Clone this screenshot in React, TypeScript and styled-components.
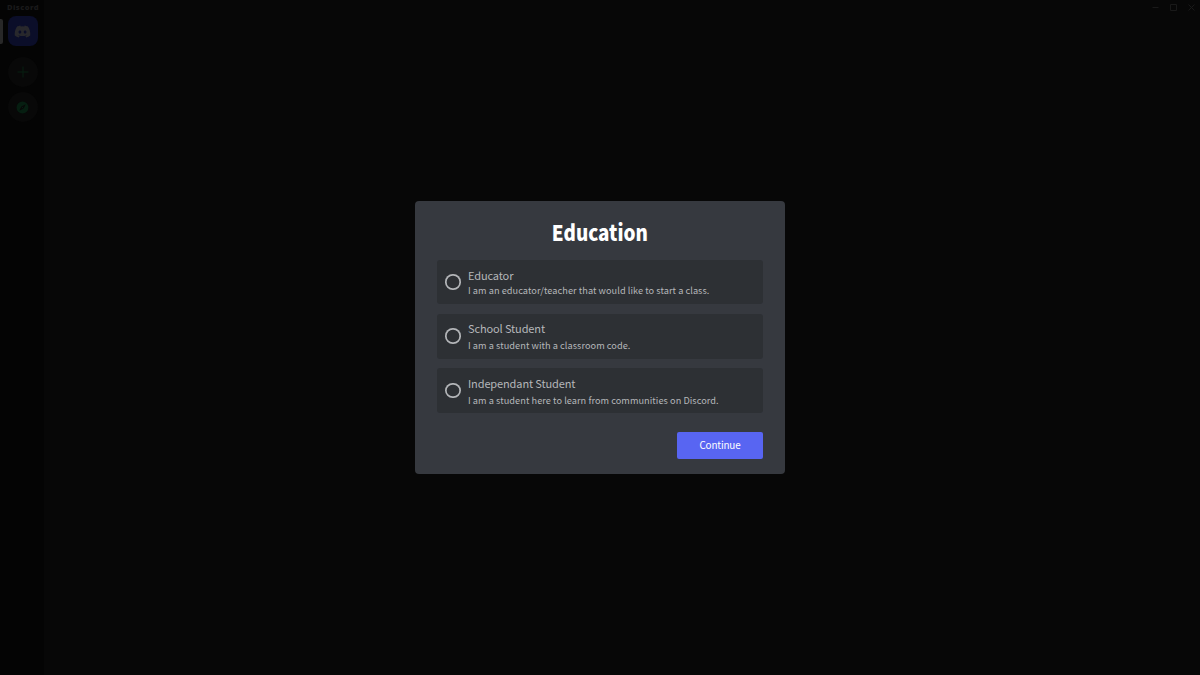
import React, { useState } from "react";
import styled, { createGlobalStyle } from "styled-components";
import { FaDiscord } from "react-icons/fa";

const GlobalStyle = createGlobalStyle`
  * {
    box-sizing: border-box;
  }

  body {
    margin: 0;
    background-color: #070707;
    font-family: "Noto Sans CJK SC", "Noto Sans", sans-serif;
  }
`;

const Window = styled.div`
  height: 100vh;
  display: flex;
  overflow: hidden;
  background-color: #070707;
`;

const Sidebar = styled.nav`
  width: 44px;
  display: flex;
  flex-direction: column;
  background-color: #040404;
`;

const Wordmark = styled.span`
  height: 16.4px;
  padding-left: 7px;
  color: #19191a;
  font-family: "Open Sans", sans-serif;
  font-size: 7.5px;
  font-weight: 800;
  line-height: 14px;
  letter-spacing: 0.45px;
`;

const ServerRow = styled.div<{ $gap: number }>`
  height: 30px;
  margin-bottom: ${props => props.$gap}px;
  display: flex;
  align-items: center;
`;

const Pill = styled.span<{ $active?: boolean }>`
  width: 2.5px;
  height: 25px;
  margin-right: 5px;
  border-radius: 0 2px 2px 0;
  background-color: ${props => (props.$active ? "#282828" : "transparent")};
`;

const ServerButton = styled.button<{ $active?: boolean }>`
  width: 30px;
  height: 30px;
  padding: 0;
  border: none;
  display: flex;
  align-items: center;
  justify-content: center;
  border-radius: ${props => (props.$active ? "8px" : "50%")};
  background-color: ${props => (props.$active ? "#0b0e29" : "#080808")};
  color: ${props => (props.$active ? "#28282c" : "#061e11")};
`;

const Content = styled.main`
  flex: 1;
  display: flex;
  justify-content: flex-end;
  align-items: flex-start;
`;

const WindowControls = styled.div`
  display: flex;
  gap: 11px;
  padding: 4px 5px 0 0;
  color: #191919;
`;

const ModalArea = styled.div`
  position: fixed;
  inset: 0;
  display: flex;
  align-items: center;
  justify-content: center;
`;

const ModalBox = styled.div`
  width: 370px;
  height: 273px;
  padding: 0 22px 0 22.3px;
  display: flex;
  flex-direction: column;
  border-radius: 4px;
  background-color: #36393f;
`;

const ModalTitle = styled.h2`
  margin: 17.5px 0 15.2px;
  color: #ffffff;
  font-size: 21.5px;
  font-weight: 900;
  line-height: 26px;
  text-align: center;
  transform: scaleX(0.875);
`;

const OptionList = styled.div`
  display: flex;
  flex-direction: column;
  gap: 9.5px;
`;

const Option = styled.button`
  width: 100%;
  height: 44.7px;
  padding: 0 0 0 8px;
  border: none;
  border-radius: 3px;
  display: flex;
  align-items: center;
  gap: 7.2px;
  background-color: #2d3034;
  color: #b5b7ba;
  font-family: inherit;
  text-align: left;
`;

const Radio = styled.span<{ $checked: boolean }>`
  flex: none;
  width: 15.5px;
  height: 15.5px;
  border-radius: 50%;
  box-shadow: inset 0 0 0 1.7px #b3b5b8;
  background-color: ${props => (props.$checked ? "#b9bbbe" : "transparent")};
`;

const OptionText = styled.span<{ $gap: number }>`
  display: flex;
  flex-direction: column;
  gap: ${props => props.$gap}px;
  padding-top: ${props => (props.$gap > 1 ? 1.4 : 0)}px;
`;

const OptionTitle = styled.span`
  font-size: 11px;
  line-height: 15px;
  letter-spacing: -0.12px;
`;

const OptionDescription = styled.span`
  font-size: 9.2px;
  line-height: 13px;
  letter-spacing: 0.05px;
  white-space: nowrap;
`;

const ContinueButton = styled.button`
  align-self: flex-end;
  width: 86px;
  height: 27px;
  margin-top: 19px;
  padding: 0;
  border: none;
  border-radius: 2px;
  background-color: #5865f2;
  color: #ffffff;
  font-family: inherit;
  font-size: 9.9px;
  line-height: 27px;
  letter-spacing: -0.15px;
`;

const options = [
  {
    title: "Educator",
    description: "I am an educator/teacher that would like to start a class.",
    gap: 1,
  },
  {
    title: "School Student",
    description: "I am a student with a classroom code.",
    gap: 3,
  },
  {
    title: "Independant Student",
    description: "I am a student here to learn from communities on Discord.",
    gap: 3,
  },
];

const PlusIcon = () => (
  <svg width="12" height="12" viewBox="0 0 12 12" stroke="currentColor">
    <path d="M6 .5v11M.5 6h11" />
  </svg>
);

const CompassIcon = () => (
  <svg width="13" height="13" viewBox="0 0 24 24" fill="currentColor">
    <path
      fillRule="evenodd"
      d="M12 1a11 11 0 1 0 0 22 11 11 0 0 0 0-22zm6 5-4 8-8 4 4-8z"
    />
    <circle cx="12" cy="12" r="1.3" />
  </svg>
);

const App = () => {
  const [selected, setSelected] = useState("");

  return (
    <>
      <GlobalStyle />
      <Window>
        <Sidebar>
          <Wordmark>Discord</Wordmark>
          <ServerRow $gap={11}>
            <Pill $active />
            <ServerButton $active>
              <FaDiscord size={17} />
            </ServerButton>
          </ServerRow>
          <ServerRow $gap={5}>
            <Pill />
            <ServerButton>
              <PlusIcon />
            </ServerButton>
          </ServerRow>
          <ServerRow $gap={0}>
            <Pill />
            <ServerButton>
              <CompassIcon />
            </ServerButton>
          </ServerRow>
        </Sidebar>
        <Content>
          <WindowControls>
            <svg width="7" height="7" viewBox="0 0 7 7" stroke="currentColor">
              <path d="M.5 3.5h6" />
            </svg>
            <svg
              width="7"
              height="7"
              viewBox="0 0 7 7"
              fill="none"
              stroke="currentColor">
              <path d="M.5.5h6v6h-6z" />
            </svg>
            <svg width="7" height="7" viewBox="0 0 7 7" stroke="currentColor">
              <path d="m.5.5 6 6m0-6-6 6" />
            </svg>
          </WindowControls>
        </Content>
      </Window>
      <ModalArea>
        <ModalBox>
          <ModalTitle>Education</ModalTitle>
          <OptionList>
            {options.map(option => (
              <Option
                key={option.title}
                type="button"
                onClick={() => setSelected(option.title)}>
                <Radio $checked={selected === option.title} />
                <OptionText $gap={option.gap}>
                  <OptionTitle>{option.title}</OptionTitle>
                  <OptionDescription>{option.description}</OptionDescription>
                </OptionText>
              </Option>
            ))}
          </OptionList>
          <ContinueButton type="button">Continue</ContinueButton>
        </ModalBox>
      </ModalArea>
    </>
  );
};

export default App;
